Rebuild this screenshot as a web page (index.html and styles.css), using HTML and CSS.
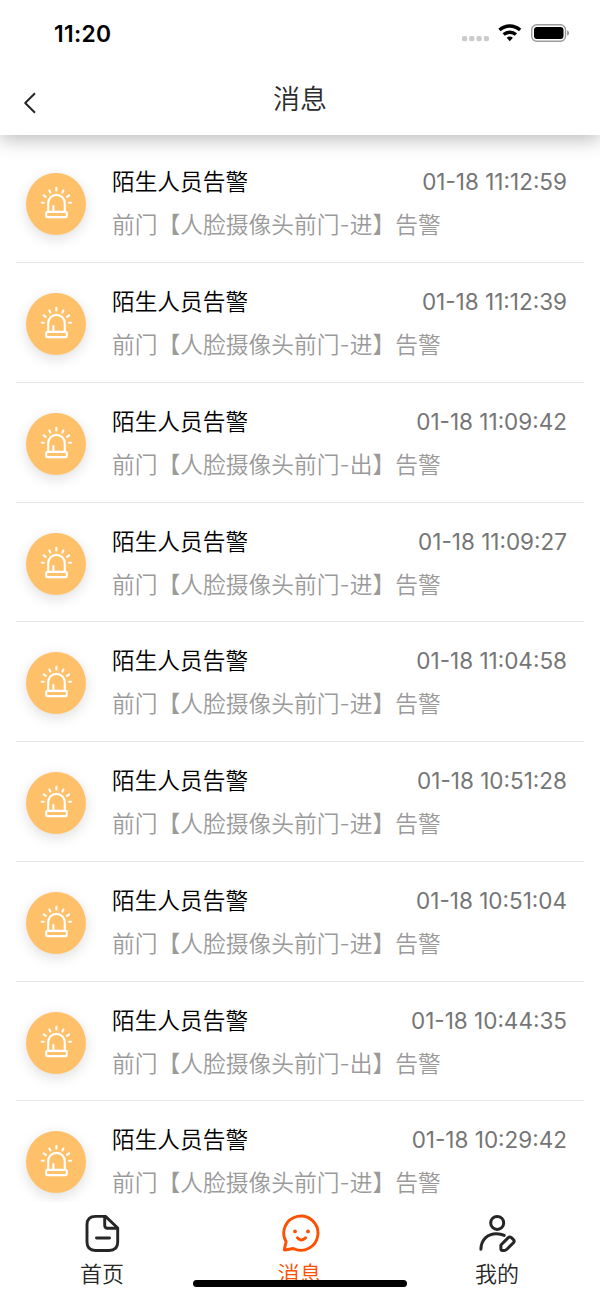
FILE: index.html
```html
<!DOCTYPE html>
<html lang="zh-CN">
<head>
<meta charset="utf-8">
<title>消息</title>
<link rel="stylesheet" href="styles.css">
</head>
<body>
<svg class="defs" aria-hidden="true">
  <symbol id="alarm" viewBox="0 0 36 36">
    <g fill="none" stroke="#fff" stroke-width="2.1" stroke-linecap="round" stroke-linejoin="round">
      <path d="M10.2 27.5V19.2a8.3 8.3 0 0 1 16.6 0v8.3"/>
      <rect x="8.2" y="27.9" width="20.6" height="5.2" rx="1.2"/>
      <path d="M15.4 27v-5M18.4 3.8v2.6M11.4 6.5l1 2M25.4 6.5l-1 2M5.7 11.3l2.1 1.6M31.1 11.3l-2.1 1.6M3.8 18.8h2M33 18.8h-2"/>
    </g>
  </symbol>
</svg>
<div class="phone">
  <header class="header">
    <div class="status">
      <span class="clock">11:20</span>
      <svg class="indicators" width="108" height="20" viewBox="0 0 108 20">
        <g fill="#cbcbcb"><rect x="0" y="12" width="5.2" height="5.2" rx="1.7"/><rect x="7.2" y="12" width="5.2" height="5.2" rx="1.7"/><rect x="14.5" y="12" width="5.2" height="5.2" rx="1.7"/><rect x="21.8" y="12" width="5.2" height="5.2" rx="1.7"/></g>
        <g fill="none" stroke="#000" stroke-width="3.4"><path d="M37.5 6.1a15 15 0 0 1 20.6 0"/><path d="M41.7 10.6a9 9 0 0 1 12.2 0"/></g>
        <path d="M44.7 13.8a4.6 4.6 0 0 1 6.2 0L47.8 17.2z"/>
        <rect x="69.7" y=".8" width="33.8" height="16.4" rx="5" fill="none" stroke="#9b9b9b" stroke-width="1.4"/>
        <rect x="72" y="3" width="29.5" height="12" rx="3"/>
        <path d="M105.2 6.2v5.6q1.8-.9 1.8-2.8t-1.8-2.8z" fill="#8c8c8c"/>
      </svg>
    </div>
    <div class="titlebar">
      <svg class="back" width="14" height="22" viewBox="0 0 14 22"><path d="M12 1.3 2.2 11 12 20.7" fill="none" stroke="#262626" stroke-width="2" stroke-linejoin="round"/></svg>
      <h1 class="title">消息</h1>
    </div>
  </header>
  <main class="list">
    <article class="item"><div class="avatar"><svg class="alarm"><use href="#alarm"/></svg></div><div class="body"><div class="top"><span class="name">陌生人员告警</span><time class="time">01-18 11:12:59</time></div><p class="desc">前门【人脸摄像头前门-进】告警</p></div></article>
    <article class="item"><div class="avatar"><svg class="alarm"><use href="#alarm"/></svg></div><div class="body"><div class="top"><span class="name">陌生人员告警</span><time class="time">01-18 11:12:39</time></div><p class="desc">前门【人脸摄像头前门-进】告警</p></div></article>
    <article class="item"><div class="avatar"><svg class="alarm"><use href="#alarm"/></svg></div><div class="body"><div class="top"><span class="name">陌生人员告警</span><time class="time">01-18 11:09:42</time></div><p class="desc">前门【人脸摄像头前门-出】告警</p></div></article>
    <article class="item"><div class="avatar"><svg class="alarm"><use href="#alarm"/></svg></div><div class="body"><div class="top"><span class="name">陌生人员告警</span><time class="time">01-18 11:09:27</time></div><p class="desc">前门【人脸摄像头前门-进】告警</p></div></article>
    <article class="item"><div class="avatar"><svg class="alarm"><use href="#alarm"/></svg></div><div class="body"><div class="top"><span class="name">陌生人员告警</span><time class="time">01-18 11:04:58</time></div><p class="desc">前门【人脸摄像头前门-进】告警</p></div></article>
    <article class="item"><div class="avatar"><svg class="alarm"><use href="#alarm"/></svg></div><div class="body"><div class="top"><span class="name">陌生人员告警</span><time class="time">01-18 10:51:28</time></div><p class="desc">前门【人脸摄像头前门-进】告警</p></div></article>
    <article class="item"><div class="avatar"><svg class="alarm"><use href="#alarm"/></svg></div><div class="body"><div class="top"><span class="name">陌生人员告警</span><time class="time">01-18 10:51:04</time></div><p class="desc">前门【人脸摄像头前门-进】告警</p></div></article>
    <article class="item"><div class="avatar"><svg class="alarm"><use href="#alarm"/></svg></div><div class="body"><div class="top"><span class="name">陌生人员告警</span><time class="time">01-18 10:44:35</time></div><p class="desc">前门【人脸摄像头前门-出】告警</p></div></article>
    <article class="item"><div class="avatar"><svg class="alarm"><use href="#alarm"/></svg></div><div class="body"><div class="top"><span class="name">陌生人员告警</span><time class="time">01-18 10:29:42</time></div><p class="desc">前门【人脸摄像头前门-进】告警</p></div></article>
  </main>
  <nav class="tabs">
    <a class="tab">
      <svg class="tab-icon" viewBox="0 0 40 40"><g fill="none" stroke="currentColor" stroke-width="2.9" stroke-linecap="round" stroke-linejoin="round"><path d="M23.5 2.4H13.5Q5 2.4 5 10.9V28Q5 36.5 13.5 36.5H27.2Q35.7 36.5 35.7 28V14z"/><path d="M22.7 3v8.2q0 3 3 3H35M14.5 24h13"/></g></svg>
      <span>首页</span>
    </a>
    <a class="tab active">
      <svg class="tab-icon" viewBox="0 0 40 40"><path d="M6.1 27.8A17.1 17.1 0 1 1 13.3 34.5L5 36Q4 36 4.4 34.9z" fill="none" stroke="currentColor" stroke-width="2.9" stroke-linejoin="round"/><circle cx="15" cy="17.4" r="1.9" fill="currentColor"/><circle cx="28" cy="17.4" r="1.9" fill="currentColor"/><path d="M17.4 23.8q4 4.3 8.2 0" fill="none" stroke="currentColor" stroke-width="3" stroke-linecap="round"/></svg>
      <span>消息</span>
    </a>
    <a class="tab">
      <svg class="tab-icon" viewBox="0 0 40 40"><g fill="none" stroke="currentColor" stroke-width="3" stroke-linecap="round" stroke-linejoin="round"><circle cx="20.2" cy="8.9" r="6.5"/><path d="M3.9 35.3C4.1 25.5 10.6 19.7 19.4 19.7q4.5 0 7.8 1.7"/><path d="M24.2 30.7 31 23.9Q32.7 22.3 34.4 23.7L36.4 25.6Q37.9 27.1 36.4 28.8L29.6 35.5Q28.6 36.5 27.2 36.5H25.6Q24 36.5 23.9 34.9V32.5Q23.6 31.3 24.2 30.7z"/></g></svg>
      <span>我的</span>
    </a>
    <div class="home-indicator"></div>
  </nav>
</div>
</body>
</html>
```
FILE: styles.css
```css
* { box-sizing: border-box; }

body {
  margin: 0;
  background: #fff;
  font-family: Inter, "Noto Sans CJK SC", sans-serif;
  color: #000;
}

.defs { display: none; }

.phone {
  display: flex;
  flex-direction: column;
  height: 1299px;
  overflow: hidden;
}

.header {
  flex: none;
  position: relative;
  z-index: 1;
  height: 135px;
  background: #fff;
  box-shadow: 0 5px 18px rgba(0, 0, 0, .26);
}

.status {
  display: flex;
  justify-content: space-between;
  align-items: center;
  height: 66px;
  padding: 0 30px 0 54px;
}

.clock { font-size: 22.8px; font-weight: 600; letter-spacing: .3px; }

.indicators { display: block; margin-top: 2px; }

.titlebar {
  display: grid;
  grid-template-columns: 60px 1fr 60px;
  align-items: center;
  height: 66px;
}

.back { margin: 8px 0 0 23px; }

.title {
  margin: 2px 0 0;
  text-align: center;
  font-size: 27px;
  font-weight: 350;
  line-height: 40px;
  color: #2b2b2b;
}

.list {
  flex: none;
  height: 1067px;
  padding: 8.3px 16px 0;
  overflow: hidden;
}

.item {
  display: flex;
  height: 119.77px;
  padding: 23px 17px 0 10px;
  border-bottom: 1px solid #e6e6e6;
}

.avatar {
  flex: none;
  display: flex;
  justify-content: center;
  align-items: center;
  width: 60px;
  height: 62px;
  margin: 7px 26px 0 0;
  border-radius: 50%;
  background: #ffc06a;
  box-shadow: 0 4px 14px rgba(0, 0, 0, .13);
}

.alarm { width: 36px; height: 36px; margin-top: -4px; }

.body { flex: 1; }

.top {
  display: flex;
  justify-content: space-between;
  height: 32px;
  line-height: 32px;
}

.name { font-size: 22.7px; font-weight: 350; }

.time { font-size: 22.5px; color: #757575; }

.desc {
  margin: 11px 0 0;
  font-size: 22.75px;
  font-weight: 350;
  line-height: 32px;
  color: #9a9a9a;
}

.tabs {
  position: relative;
  flex: none;
  display: flex;
  justify-content: space-between;
  height: 97px;
  padding: 12px 71px 0 70px;
  background: #fff;
}

.tab {
  display: flex;
  flex-direction: column;
  align-items: center;
  width: 64px;
  font-size: 22px;
  font-weight: 350;
  line-height: 32px;
  color: #262626;
}

.tab.active { color: #ff5000; }

.tab-icon { width: 40px; height: 40px; margin-bottom: 4px; }

.home-indicator {
  position: absolute;
  left: 193px;
  top: 78px;
  width: 214px;
  height: 7px;
  border-radius: 4px;
  background: #000;
}
```
